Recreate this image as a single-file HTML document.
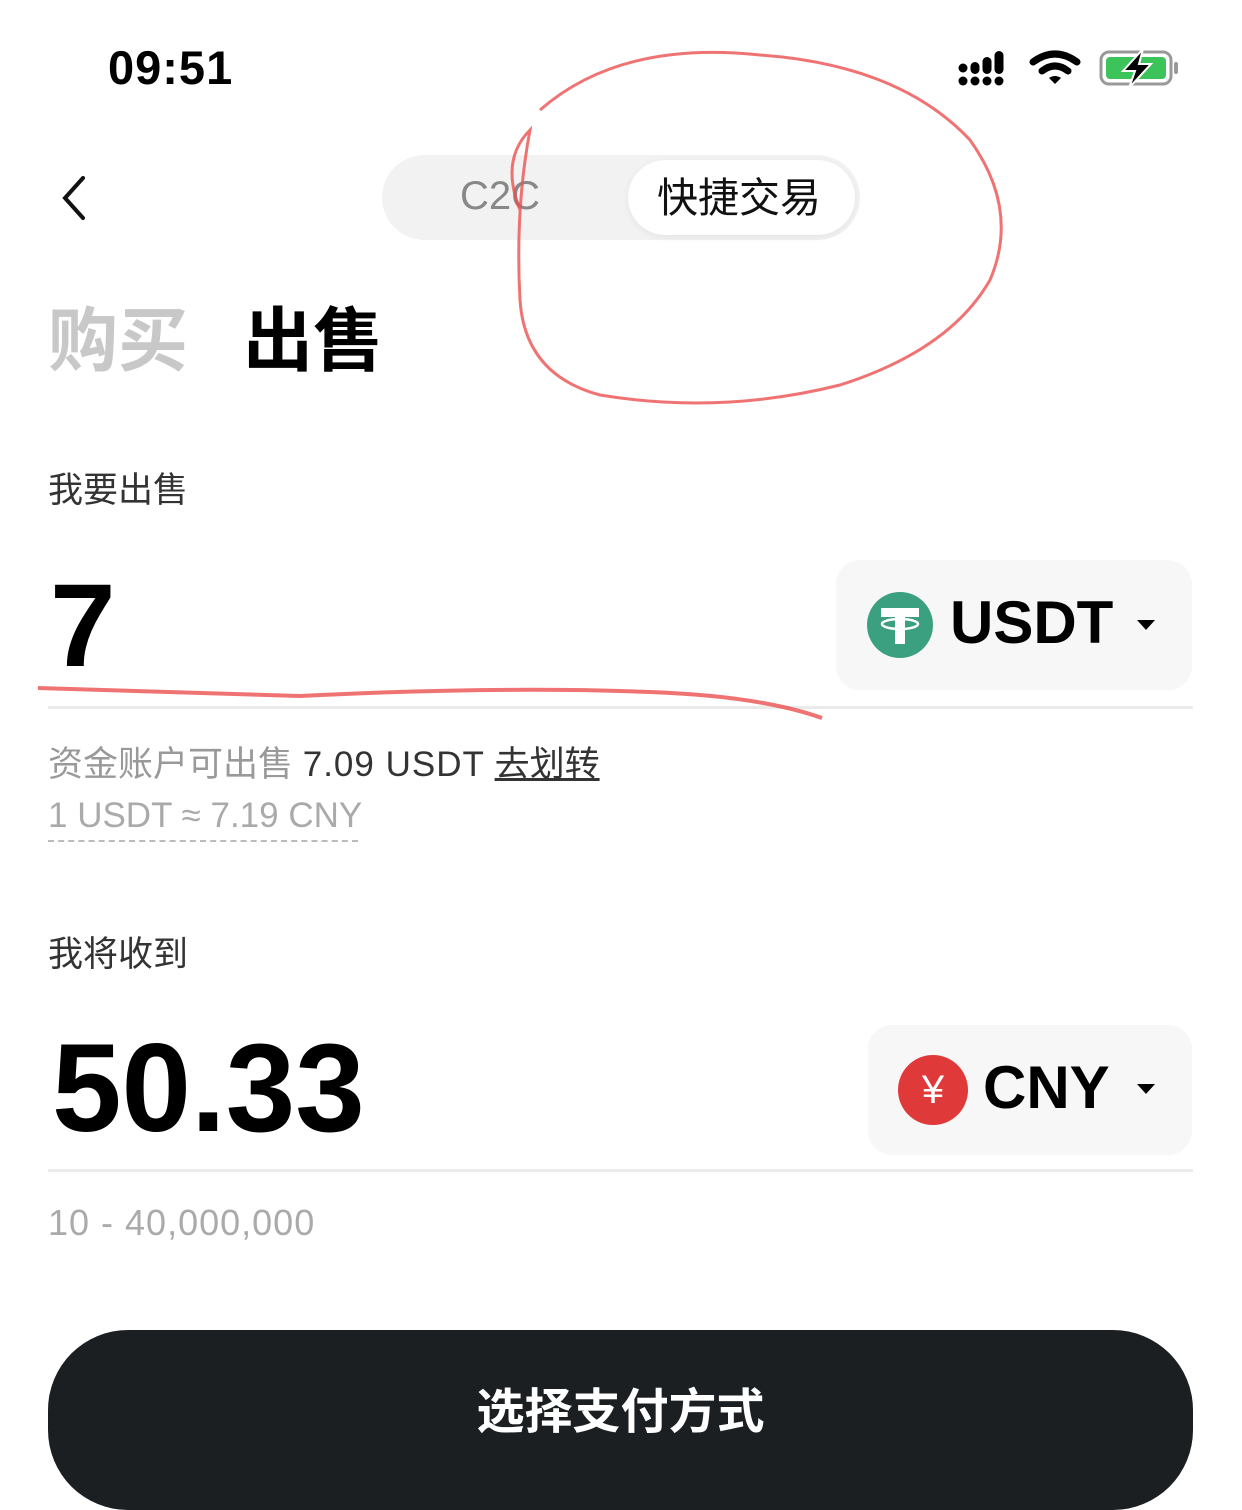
<!DOCTYPE html>
<html><head><meta charset="utf-8"><style>
body{margin:0;width:1242px;height:1483px;background:#fff;position:relative;overflow:hidden;font-family:"Liberation Sans","Noto Sans CJK SC",sans-serif}
.a{position:absolute;white-space:nowrap}
</style></head><body>
<div class="a" style="left:108px;top:40px;font-size:47px;font-weight:bold;color:#000;letter-spacing:1px">09:51</div>
<svg class="a" style="left:955px;top:48px" width="230" height="42">
<g fill="#000"><circle cx="8" cy="33" r="4.5"/><circle cx="20" cy="33" r="4.5"/><circle cx="32" cy="33" r="4.5"/><circle cx="44" cy="33" r="4.5"/><circle cx="8" cy="20" r="4.5"/><rect x="15.5" y="14" width="9" height="12" rx="4.5"/><rect x="27.5" y="9" width="9" height="17" rx="4.5"/><rect x="39.5" y="3" width="9" height="23" rx="4.5"/></g>
<path d="M78 14 Q100 -2 122 14" stroke="#000" stroke-width="7" fill="none" stroke-linecap="round"/><path d="M87 23 Q100 13 113 23" stroke="#000" stroke-width="7" fill="none" stroke-linecap="round"/><path d="M94 30 L100 36 L106 30 Q100 26 94 30Z" fill="#000"/>
<rect x="146" y="4" width="70" height="32" rx="8" fill="none" stroke="#999" stroke-width="3"/><rect x="151" y="9" width="60" height="22" rx="4" fill="#3cc35a"/><rect x="219" y="14" width="4" height="12" rx="2" fill="#999"/>
<path d="M188 1 L168 23 L180 23 L174 40 L196 16 L184 16 Z" fill="#000" stroke="#fff" stroke-width="2"/>
</svg>
<svg class="a" style="left:55px;top:172px" width="40" height="52"><path d="M28 6 L10 26 L28 46" stroke="#111" stroke-width="4" fill="none" stroke-linecap="round"/></svg>
<div class="a" style="left:382px;top:155px;width:478px;height:85px;border-radius:43px;background:#f2f2f2"></div>
<div class="a" style="left:628px;top:160px;width:227px;height:75px;border-radius:38px;background:#fff;box-shadow:0 2px 8px rgba(0,0,0,.06)"></div>
<div class="a" style="left:460px;top:174px;font-size:40px;color:#888">C2C</div>
<div class="a" style="left:657px;top:164px;font-size:41px;color:#111">快捷交易</div>
<div class="a" style="left:48px;top:285px;font-size:70px;font-weight:bold;color:#c8c8c8">购买</div>
<div class="a" style="left:243px;top:285px;font-size:70px;font-weight:bold;color:#000">出售</div>
<div class="a" style="left:48px;top:462px;font-size:35px;color:#333">我要出售</div>
<div class="a" style="left:50px;top:558px;font-size:118px;font-weight:bold;color:#000">7</div>
<div class="a" style="left:836px;top:560px;width:356px;height:130px;border-radius:24px;background:#f7f7f7"></div>
<svg class="a" style="left:867px;top:592px" width="66" height="66"><circle cx="33" cy="33" r="33" fill="#3aa07f"/><rect x="14" y="16" width="38" height="9" fill="#fff"/><rect x="28" y="16" width="10" height="36" fill="#fff"/><ellipse cx="33" cy="32" rx="18" ry="5" fill="none" stroke="#fff" stroke-width="2.5"/></svg>
<div class="a" style="left:950px;top:588px;font-size:60px;font-weight:bold;color:#000">USDT</div>
<svg class="a" style="left:1136px;top:618px" width="20" height="14"><path d="M1 2 L19 2 L10 12Z" fill="#000"/></svg>
<div class="a" style="left:48px;top:706px;width:1145px;height:3px;background:#ebebeb"></div>
<div class="a" style="left:48px;top:736px;font-size:35px;color:#999">资金账户可出售 <span style="color:#333;letter-spacing:1px">7.09 USDT</span> <span style="color:#333;text-decoration:underline">去划转</span></div>
<div class="a" style="left:48px;top:796px;font-size:35px;color:#aaa">1 USDT ≈ 7.19 CNY</div>
<div class="a" style="left:48px;top:840px;width:310px;border-top:2px dashed #bbb"></div>
<div class="a" style="left:48px;top:926px;font-size:35px;color:#333">我将收到</div>
<div class="a" style="left:52px;top:1017px;font-size:125px;font-weight:bold;color:#000">50.33</div>
<div class="a" style="left:868px;top:1025px;width:324px;height:130px;border-radius:24px;background:#f7f7f7"></div>
<div class="a" style="left:898px;top:1055px;width:70px;height:70px;border-radius:50%;background:#e0393a;color:#fff;font-size:40px;text-align:center;line-height:70px">¥</div>
<div class="a" style="left:983px;top:1053px;font-size:60px;font-weight:bold;color:#000">CNY</div>
<svg class="a" style="left:1136px;top:1082px" width="20" height="14"><path d="M1 2 L19 2 L10 12Z" fill="#000"/></svg>
<div class="a" style="left:48px;top:1169px;width:1145px;height:3px;background:#ebebeb"></div>
<div class="a" style="left:48px;top:1202px;font-size:36px;color:#aaa;letter-spacing:1px">10 - 40,000,000</div>
<div class="a" style="left:48px;top:1330px;width:1145px;height:180px;border-radius:80px;background:#1c1f22"></div>
<div class="a" style="left:48px;top:1372px;width:1145px;text-align:center;font-size:48px;font-weight:bold;color:#fff">选择支付方式</div>
<svg class="a" style="left:0;top:0" width="1242" height="1483">
<path d="M540 110 Q620 40 760 55 Q900 65 970 140 Q1020 210 990 280 Q950 350 840 385 Q720 415 600 395 Q525 375 520 300 Q515 210 530 130 Q500 160 520 210" stroke="#ec5050" stroke-width="3" fill="none" opacity=".8"/>
<path d="M38 688 Q150 692 300 696 Q500 686 650 692 Q760 696 822 718" stroke="#ec5050" stroke-width="4" fill="none" opacity=".8"/>
</svg>
</body></html>
